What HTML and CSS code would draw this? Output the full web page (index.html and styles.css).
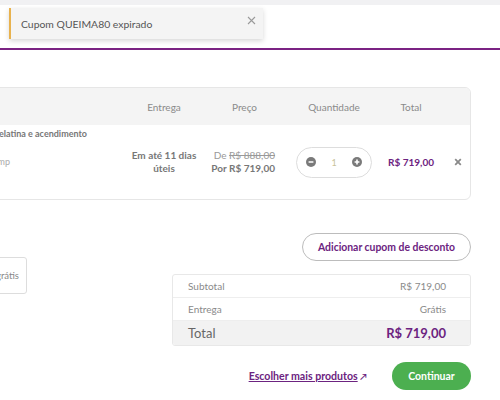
FILE: index.html
```html
<!DOCTYPE html>
<html lang="pt-BR">
<head>
<meta charset="utf-8">
<title>Carrinho</title>
<link rel="stylesheet" href="styles.css">
</head>
<body>
  <div class="topbar"></div>
  <header class="header"></header>

  <div class="toast">
    <span class="toast-text">Cupom QUEIMA80 expirado</span>
    <svg class="toast-close" width="9" height="9" viewBox="0 0 9 9"><path d="M1 1L8 8M8 1L1 8" stroke="#9a9a9a" stroke-width="1.1" fill="none"/></svg>
  </div>

  <main class="main">
    <section class="cart">
      <div class="cart-head">
        <div></div>
        <div class="col">Entrega</div>
        <div class="col">Preço</div>
        <div class="col">Quantidade</div>
        <div class="col">Total</div>
        <div></div>
      </div>
      <div class="cart-row">
        <div class="product">
          <div class="product-name">Fogão cooktop por indução com mesa em gelatina e acendimento</div>
          <div class="product-sku">Voltagem: 220V | 10 amp</div>
        </div>
        <div class="delivery">Em até 11 dias<br>úteis</div>
        <div class="price">
          <div class="price-old">De <s>R$ 888,00</s></div>
          <div class="price-new">Por R$ 719,00</div>
        </div>
        <div class="qty-cell">
          <div class="qty">
            <svg width="10" height="10" viewBox="0 0 10 10"><circle cx="5" cy="5" r="5" fill="#7a7a7a"/><path d="M2.6 5H7.4" stroke="#fff" stroke-width="1.6"/></svg>
            <span class="qty-num">1</span>
            <svg width="10" height="10" viewBox="0 0 10 10"><circle cx="5" cy="5" r="5" fill="#7a7a7a"/><path d="M2.6 5H7.4M5 2.6V7.4" stroke="#fff" stroke-width="1.6"/></svg>
          </div>
        </div>
        <div class="line-total">R$ 719,00</div>
        <div class="remove">
          <svg width="8" height="8" viewBox="0 0 8 8"><path d="M1.2 1.2L6.8 6.8M6.8 1.2L1.2 6.8" stroke="#8a8a8a" stroke-width="1.8"/></svg>
        </div>
      </div>
    </section>

    <div class="lower">
      <div class="shipping">
        <div class="shipping-box">Frete grátis</div>
      </div>
      <div class="checkout">
        <button class="coupon-btn">Adicionar cupom de desconto</button>
        <div class="summary">
          <div class="sum-row"><span>Subtotal</span><span>R$ 719,00</span></div>
          <div class="sum-row"><span>Entrega</span><span>Grátis</span></div>
          <div class="sum-row sum-total"><span>Total</span><span class="sum-total-value">R$ 719,00</span></div>
        </div>
      </div>
    </div>

    <div class="actions">
      <a class="more-link" href="#"><span class="more-text">Escolher mais produtos</span> <span class="arrow">↗</span></a>
      <button class="continue-btn">Continuar</button>
    </div>
  </main>
</body>
</html>
```

FILE: styles.css
```css
* { box-sizing: border-box; }

html, body {
  margin: 0;
  background: #fff;
}

body {
  width: 500px;
  height: 400px;
  overflow: hidden;
  font-family: Lato, "Open Sans", sans-serif;
  color: #888;
  position: relative;
}

.topbar {
  height: 5px;
  background: #f1f1f3;
}

.header {
  height: 45px;
  border-bottom: 2px solid #7b2383;
}

/* Notification toast */
.toast {
  position: absolute;
  top: 8px;
  left: 9px;
  width: 254px;
  height: 31px;
  background: #f4f4f4;
  border-left: 2px solid #e8b24e;
  box-shadow: 0 2px 5px rgba(0, 0, 0, 0.16);
  display: flex;
  align-items: center;
  justify-content: space-between;
  padding: 0 7px 0 10px;
}

.toast-text {
  font-size: 10.4px;
  color: #555;
}

.toast-close {
  margin-top: -7px;
}

.main {
  padding: 37px 29px 0 0;
}

/* Cart table */
.cart {
  margin-left: -180px;
  border: 1px solid #e6e6e6;
  border-radius: 6px;
  overflow: hidden;
}

.cart-head,
.cart-row {
  display: grid;
  grid-template-columns: 308px 70px 91px 88px 66px 27px;
}

.cart-head {
  height: 37px;
  background: #f4f4f4;
  align-items: center;
}

.col {
  text-align: center;
  font-size: 10px;
  color: #8a8a8a;
}

.cart-row {
  height: 74px;
  align-items: center;
}

.product {
  align-self: stretch;
  text-align: right;
  padding-right: 42px;
  white-space: nowrap;
  overflow: hidden;
}

.product-name {
  margin-top: 3px;
  font-size: 9px;
  font-weight: 700;
  color: #777;
}

.product-sku {
  margin-top: 17px;
  padding-right: 77px;
  font-size: 9px;
  color: #aaa;
}

.delivery {
  text-align: center;
  font-size: 10px;
  font-weight: 700;
  line-height: 13px;
  color: #777;
}

.price {
  text-align: right;
  padding-right: 15px;
  font-size: 10px;
  line-height: 13px;
}

.price-old {
  color: #999;
}

.price-new {
  font-weight: 700;
  color: #777;
}

.qty-cell {
  display: flex;
  justify-content: center;
}

.qty {
  width: 76px;
  height: 31px;
  border: 1px solid #ddd;
  border-radius: 16px;
  display: flex;
  align-items: center;
  justify-content: space-between;
  padding: 0 9px;
}

.qty-num {
  font-size: 9px;
  color: #c9c29a;
}

.line-total {
  text-align: center;
  font-size: 10px;
  font-weight: 700;
  color: #6c2380;
}

.remove {
  display: flex;
  justify-content: center;
}

/* Lower area: shipping note + summary */
.lower {
  display: flex;
  justify-content: space-between;
  margin-top: 33px;
}

.shipping {
  padding-top: 24px;
}

.shipping-box {
  margin-left: -60px;
  width: 87px;
  height: 37px;
  border: 1px solid #ddd;
  border-radius: 3px;
  display: flex;
  align-items: center;
  justify-content: flex-end;
  padding-right: 7px;
  font-size: 9.5px;
  color: #888;
  white-space: nowrap;
}

.checkout {
  width: 299px;
  display: flex;
  flex-direction: column;
  align-items: flex-end;
}

.coupon-btn {
  height: 28px;
  width: 169px;
  padding: 0;
  background: #fff;
  border: 1px solid #bcbcbc;
  border-radius: 14px;
  font-family: inherit;
  font-size: 10.4px;
  font-weight: 700;
  color: #6c2380;
}

.summary {
  margin-top: 13px;
  width: 100%;
  border: 1px solid #e8e8e8;
  border-radius: 3px;
  overflow: hidden;
}

.sum-row {
  display: flex;
  justify-content: space-between;
  align-items: center;
  height: 23px;
  padding: 0 24px 0 15px;
  font-size: 10px;
  color: #8a8a8a;
  border-bottom: 1px solid #eee;
}

.sum-row:last-child {
  border-bottom: none;
}

.sum-total {
  height: 24px;
  background: #f2f2f2;
  font-size: 13px;
  color: #666;
}

.sum-total-value {
  font-weight: 700;
  color: #6c2380;
}

/* Bottom actions */
.actions {
  margin-top: 16px;
  display: flex;
  justify-content: flex-end;
  align-items: center;
  gap: 25px;
}

.more-link {
  text-decoration: none;
  font-size: 10.6px;
  font-weight: 700;
  color: #6c2380;
}

.more-text {
  text-decoration: underline;
}

.arrow {
  font-size: 9px;
}

.continue-btn {
  width: 79px;
  height: 28px;
  border: none;
  border-radius: 14px;
  background: #4caf50;
  color: #fff;
  font-family: inherit;
  font-size: 10.5px;
  font-weight: 700;
}
```
